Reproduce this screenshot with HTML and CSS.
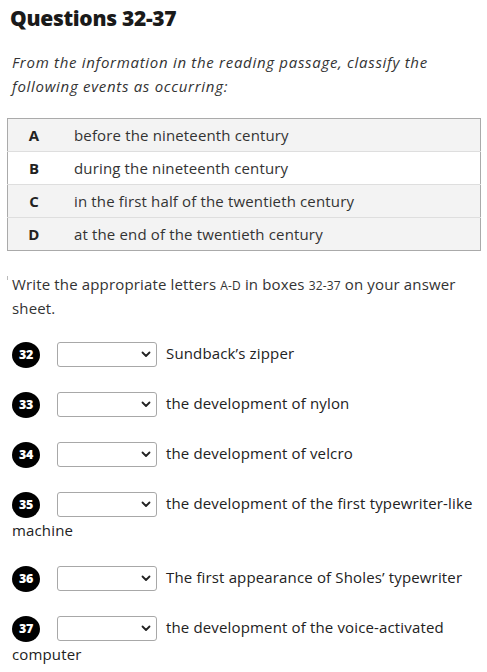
FILE: index.html
```html
<!DOCTYPE html>
<html>
<head>
<meta charset="utf-8">
<link rel="stylesheet" href="styles.css">
</head>
<body>
<div class="page">
  <h1 class="title">Questions 32-37</h1>
  <p class="intro">From the information in the reading passage, classify the following events as occurring:</p>
  <table class="options">
    <tr class="shade"><td class="letter">A</td><td class="desc">before the nineteenth century</td></tr>
    <tr><td class="letter">B</td><td class="desc">during the nineteenth century</td></tr>
    <tr class="shade"><td class="letter">C</td><td class="desc">in the first half of the twentieth century</td></tr>
    <tr class="shade"><td class="letter">D</td><td class="desc">at the end of the twentieth century</td></tr>
  </table>
  <p class="instr"><span class="tick"></span>Write the appropriate letters <span class="sm">A-D</span> in boxes <span class="sm">32-37</span> on your answer sheet.</p>
  <div class="qs">
    <div class="q"><span class="num">32</span><span class="sel"><svg width="10" height="7" viewBox="0 0 10 7"><path d="M1.5 1.5 L5 5 L8.5 1.5" fill="none" stroke="#222" stroke-width="1.8" stroke-linecap="round" stroke-linejoin="round"/></svg></span>Sundback’s zipper</div>
    <div class="q"><span class="num">33</span><span class="sel"><svg width="10" height="7" viewBox="0 0 10 7"><path d="M1.5 1.5 L5 5 L8.5 1.5" fill="none" stroke="#222" stroke-width="1.8" stroke-linecap="round" stroke-linejoin="round"/></svg></span>the development of nylon</div>
    <div class="q"><span class="num">34</span><span class="sel"><svg width="10" height="7" viewBox="0 0 10 7"><path d="M1.5 1.5 L5 5 L8.5 1.5" fill="none" stroke="#222" stroke-width="1.8" stroke-linecap="round" stroke-linejoin="round"/></svg></span>the development of velcro</div>
    <div class="q"><span class="num">35</span><span class="sel"><svg width="10" height="7" viewBox="0 0 10 7"><path d="M1.5 1.5 L5 5 L8.5 1.5" fill="none" stroke="#222" stroke-width="1.8" stroke-linecap="round" stroke-linejoin="round"/></svg></span>the development of the first typewriter-like machine</div>
    <div class="q"><span class="num">36</span><span class="sel"><svg width="10" height="7" viewBox="0 0 10 7"><path d="M1.5 1.5 L5 5 L8.5 1.5" fill="none" stroke="#222" stroke-width="1.8" stroke-linecap="round" stroke-linejoin="round"/></svg></span>The first appearance of Sholes’ typewriter</div>
    <div class="q"><span class="num">37</span><span class="sel"><svg width="10" height="7" viewBox="0 0 10 7"><path d="M1.5 1.5 L5 5 L8.5 1.5" fill="none" stroke="#222" stroke-width="1.8" stroke-linecap="round" stroke-linejoin="round"/></svg></span>the development of the voice-activated computer</div>
  </div>
</div>
</body>
</html>
```
FILE: styles.css
```css
html, body {
  margin: 0;
  padding: 0;
  background: #fff;
}
body {
  font-family: "Open Sans", "Lato", sans-serif;
  color: #222;
  font-size: 15px;
  letter-spacing: 0.15px;
}
.page {
  padding: 5px 7px 0 12px;
}
.title {
  margin: 0 0 0 -2px;
  font-family: "Open Sans", sans-serif;
  font-weight: 800;
  font-size: 21px;
  line-height: 26px;
  color: #1a1a1a;
  letter-spacing: -0.3px;
}
.intro {
  margin: 19px 0 0 0;
  font-style: italic;
  line-height: 24px;
  color: #333;
  letter-spacing: 0.7px;
}
.options {
  margin: 20px 0 0 -5px;
  width: 474px;
  border-collapse: collapse;
  border: 1px solid #aaa;
}
.options td {
  height: 32px;
  padding: 0;
  border-top: 1px solid #dedede;
  vertical-align: middle;
  color: #333;
}
.options tr:first-child td {
  border-top: none;
}
.options tr.shade td {
  background: #f3f3f3;
}
.letter {
  width: 52px;
  text-align: center;
  font-weight: bold;
  color: #222 !important;
}
.desc {
  padding-left: 14px !important;
}
.instr {
  margin: 21px 0 0 0;
  line-height: 24px;
  color: #333;
  position: relative;
}
.tick {
  position: absolute;
  left: -5px;
  top: 4px;
  width: 1px;
  height: 4px;
  background: #bbb;
}
.sm {
  font-size: 12px;
  line-height: 1;
}
.qs {
  margin-top: 21px;
}
.q {
  line-height: 24px;
  margin-bottom: 23px;
  color: #222;
}
.num {
  display: inline-flex;
  align-items: center;
  justify-content: center;
  vertical-align: middle;
  width: 28px;
  height: 26px;
  border-radius: 50%;
  background: #000;
  color: #fff;
  font-family: "Open Sans", sans-serif;
  font-weight: 800;
  font-size: 12.5px;
  line-height: 1;
  letter-spacing: -0.3px;
  margin-right: 17px;
}
.sel {
  display: inline-flex;
  vertical-align: middle;
  box-sizing: border-box;
  width: 100px;
  height: 25px;
  border: 1px solid #a8a8a8;
  border-radius: 3px;
  background: #fff;
  align-items: center;
  justify-content: flex-end;
  padding-right: 5px;
  margin-right: 9px;
}
.sel svg {
  display: block;
}
```
